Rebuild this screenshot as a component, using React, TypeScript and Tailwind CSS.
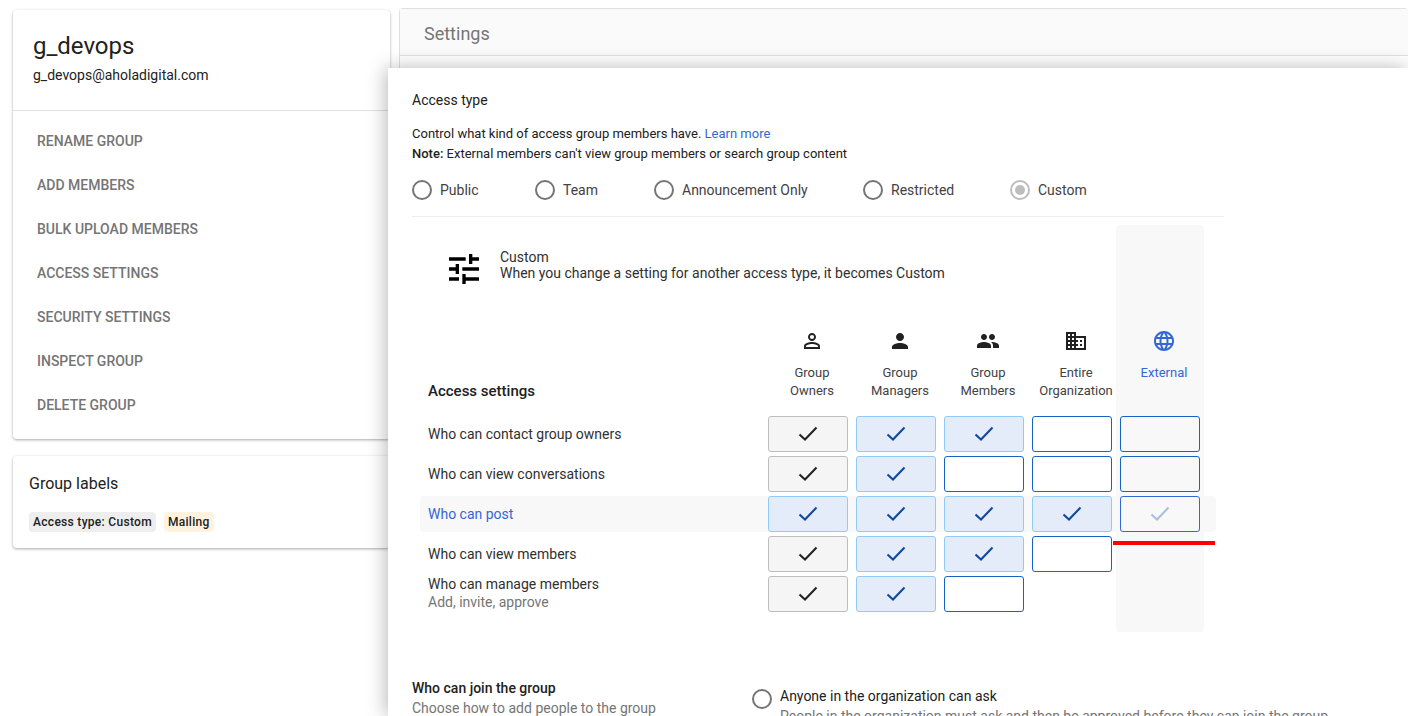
import { MdDomain, MdLanguage, MdPeople, MdPerson, MdPersonOutline, MdTune } from "react-icons/md";
import type { ReactNode } from "react";

const menuItems = [
  "Rename group",
  "Add members",
  "Bulk upload members",
  "Access settings",
  "Security settings",
  "Inspect group",
  "Delete group",
];

const accessTypes = [
  { label: "Public", className: "w-[123px]" },
  { label: "Team", className: "w-[119px]" },
  { label: "Announcement Only", className: "w-[209px]" },
  { label: "Restricted", className: "w-[147px]" },
  { label: "Custom", className: "", selected: true },
];

const columns = [
  { icon: <MdPersonOutline size={24} />, lines: ["Group", "Owners"] },
  { icon: <MdPerson size={24} />, lines: ["Group", "Managers"] },
  { icon: <MdPeople size={24} />, lines: ["Group", "Members"] },
  { icon: <MdDomain size={24} />, lines: ["Entire", "Organization"] },
  { icon: <MdLanguage size={24} />, lines: ["External"], active: true },
];

type CellKind = "locked" | "on" | "off" | "faded" | "none";

const rows: { label: string; sub?: string; active?: boolean; cells: CellKind[] }[] = [
  { label: "Who can contact group owners", cells: ["locked", "on", "on", "off", "off"] },
  { label: "Who can view conversations", cells: ["locked", "on", "off", "off", "off"] },
  { label: "Who can post", active: true, cells: ["on", "on", "on", "on", "faded"] },
  { label: "Who can view members", cells: ["locked", "on", "on", "off", "none"] },
  {
    label: "Who can manage members",
    sub: "Add, invite, approve",
    cells: ["locked", "on", "off", "none", "none"],
  },
];

const cellStyles: Record<CellKind, string> = {
  locked: "border-[#bdbdbd] bg-[#f5f5f5] text-[#212121]",
  on: "border-[#90caf9] bg-[#e5ecf9] text-[#0d47a1]",
  off: "border-[#1565c0]",
  faded: "border-[#3367d6] text-[#a9bddf]",
  none: "invisible",
};

const Check = () => (
  <svg width="20" height="16" viewBox="0 0 20 16" fill="none" stroke="currentColor" strokeWidth="2">
    <path d="M1.5 8.5 L7 13.5 L18.5 1.5" />
  </svg>
);

const Radio = ({ selected }: { selected?: boolean }) => (
  <span
    className={`flex h-5 w-5 shrink-0 items-center justify-center rounded-full border-2 ${
      selected ? "border-[#bdbdbd]" : "border-[#757575]"
    }`}>
    {selected && <span className="h-2.5 w-2.5 rounded-full bg-[#bdbdbd]" />}
  </span>
);

const Chip = ({ className, children }: { className: string; children: ReactNode }) => (
  <span className={`flex h-5 items-center rounded px-1 text-xs font-medium tracking-[0.3px] text-[#212121] ${className}`}>
    {children}
  </span>
);

//* —————————————————————————————————————————————————————————————————————————————————————

const Sidebar = () => (
  <aside className="ml-[13px] flex w-[377px] shrink-0 flex-col gap-[17px] pt-[10px]">
    <section className="h-[429px] rounded-sm bg-white shadow-[0_1px_3px_rgba(0,0,0,0.35)]">
      <div className="h-[101px] border-b border-[#e0e0e0] px-5 pt-5">
        <h1 className="text-2xl leading-8 text-[#212121]">g_devops</h1>
        <p className="mt-[3px] text-sm leading-5 text-[#212121]">g_devops@aholadigital.com</p>
      </div>
      <ul className="pt-2 pl-6">
        {menuItems.map(item => (
          <li key={item} className="flex h-11 items-center text-sm font-medium text-[#757575] uppercase">
            {item}
          </li>
        ))}
      </ul>
    </section>

    <section className="h-[92px] rounded-sm bg-white px-4 pt-[18px] shadow-[0_1px_3px_rgba(0,0,0,0.35)]">
      <h2 className="text-base leading-5 text-[#212121]">Group labels</h2>
      <div className="mt-[18px] flex gap-2">
        <Chip className="bg-[#eeeeee]">Access type: Custom</Chip>
        <Chip className="bg-[#fff3e0]">Mailing</Chip>
      </div>
    </section>
  </aside>
);

const Permissions = () => (
  <div className="relative mt-2 h-[407px]">
    <div className="absolute top-0 left-[704px] h-full w-[88px] rounded bg-[#f8f8f8]" />
    <div className="absolute top-[316px] left-[701px] z-10 h-1 w-[102px] bg-[#ff0000]" />

    <div className="relative flex items-start pt-6 pl-8">
      <MdTune size={40} className="text-black" />
      <div className="ml-4 text-sm leading-4 text-[#303030]">
        <p>Custom</p>
        <p>When you change a setting for another access type, it becomes Custom</p>
      </div>
    </div>

    <div className="relative mt-10 flex h-[87px] pl-4">
      <h3 className="mt-[52px] w-[340px] shrink-0 text-[15px] leading-5 font-medium text-[#212121]">
        Access settings
      </h3>
      {columns.map(col => (
        <div
          key={col.lines.join(" ")}
          className={`flex w-[88px] shrink-0 flex-col items-center whitespace-nowrap text-[13px] leading-[18px] ${
            col.active ? "text-[#3367d6]" : "text-[#424242]"
          }`}>
          <span className={`mb-[11px] ${col.active ? "text-[#3367d6]" : "text-[#212121]"}`}>{col.icon}</span>
          {col.lines.map(line => (
            <span key={line}>{line}</span>
          ))}
        </div>
      ))}
    </div>

    <div className="relative flex flex-col gap-1">
      {rows.map(row => (
        <div
          key={row.label}
          className={`ml-2 flex h-9 w-[796px] items-center rounded-sm pl-2 ${row.active ? "bg-[#f8f8f8]" : ""}`}>
          <div
            className={`w-[340px] shrink-0 text-sm leading-[18px] ${row.sub ? "mb-0.5" : ""} ${
              row.active ? "text-[#3367d6]" : "text-[#303030]"
            }`}>
            <p>{row.label}</p>
            {row.sub && <p className="text-[#757575]">{row.sub}</p>}
          </div>
          <div className="flex gap-2">
            {row.cells.map((kind, i) => (
              <div
                key={i}
                className={`flex h-9 w-20 items-center justify-center rounded-[3px] border ${cellStyles[kind]}`}>
                {kind !== "off" && kind !== "none" && <Check />}
              </div>
            ))}
          </div>
        </div>
      ))}
    </div>
  </div>
);

const AccessPanel = () => (
  <div className="absolute top-[68px] right-0 bottom-0 left-[388px] overflow-hidden bg-white pt-[22px] pl-6 shadow-[-2px_0_18px_rgba(0,0,0,0.28)]">
    <h2 className="text-sm leading-5 text-[#212121]">Access type</h2>
    <div className="mt-[14px] text-[13px] leading-5 text-[#212121]">
      <p>
        Control what kind of access group members have. <span className="text-[#3367d6]">Learn more</span>
      </p>
      <p>
        <span className="font-medium">Note:</span> External members can't view group members or search group content
      </p>
    </div>

    <div className="mt-[16px] flex h-5 items-center">
      {accessTypes.map(t => (
        <label key={t.label} className={`flex items-center gap-2 text-sm text-[#424242] ${t.className}`}>
          <Radio selected={t.selected} />
          {t.label}
        </label>
      ))}
    </div>
    <div className="mt-4 h-px w-[812px] bg-[#eeeeee]" />

    <Permissions />

    <div className="mt-[46px] flex text-sm leading-5">
      <div className="w-[340px] shrink-0">
        <p className="font-medium text-[#212121]">Who can join the group</p>
        <p className="text-[#757575]">Choose how to add people to the group</p>
      </div>
      <div className="mt-[8px] flex gap-2">
        <span className="mt-[3px]">
          <Radio />
        </span>
        <div className="whitespace-nowrap">
          <p className="text-[#212121]">Anyone in the organization can ask</p>
          <p className="text-[#757575]">People in the organization must ask and then be approved before they can join the group.</p>
        </div>
      </div>
    </div>
  </div>
);

export default function App() {
  return (
    <main className="relative flex h-[716px] w-[1408px] overflow-hidden bg-white font-['Roboto',sans-serif]">
      <Sidebar />
      <section className="mt-2 ml-[9px] flex-1 rounded-t-sm border border-r-0 border-[#e0e0e0]">
        <header className="flex h-[47px] items-center border-b border-[#e0e0e0] bg-[#fafafa] pt-1 pl-6 text-lg text-[#757575]">
          Settings
        </header>
      </section>
      <AccessPanel />
    </main>
  );
}
